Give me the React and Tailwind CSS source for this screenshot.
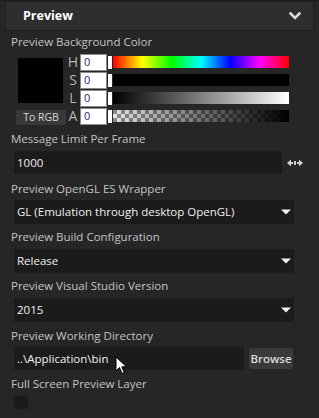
import React from "react";

const Label = ({ children, className = "" }) => (
  <div className={"pl-[11px] text-[11.5px] leading-[16px] text-[#c4c4c4] " + className}>{children}</div>
);

const DropTriangle = () => (
  <svg width="10" height="6" viewBox="0 0 10 6" className="shrink-0">
    <path d="M0 0.5 H10 L5 5.5 Z" fill="#f2f2f2" />
  </svg>
);

const Select = ({ value, className = "" }) => (
  <div className={"ml-[14px] w-[280px] h-[24px] bg-[#1b1b1b] flex items-center justify-between pl-[3px] pr-[3px] " + className}>
    <span className="text-[11.5px] text-[#f0f0f0]">{value}</span>
    <DropTriangle />
  </div>
);

const HslRow = ({ letter, bar }) => (
  <div className="flex items-center h-[18px]">
    <div className="w-[14px] text-center text-[14px] text-[#b4b4b4] leading-none">{letter}</div>
    <div className="w-[27px] h-[17px] bg-white border border-[#8a8a8a] flex items-center pl-[3px] text-[11px] text-[#1c2c6c]">0</div>
    <div className="w-[4px] h-[13px] bg-white ml-[1px]" />
    <div className="ml-px w-[176px] h-[12px] relative overflow-hidden">{bar}</div>
  </div>
);

export default function App() {
  return (
    <div
      className="w-[319px] h-[418px] bg-[#262626] overflow-hidden"
      style={{ fontFamily: '"Open Sans", "Noto Sans", sans-serif' }}
    >
      <div className="h-px bg-[#1c1c1c]" />
      <div className="mx-[5px] h-[30px] bg-[#2e2e2e] border border-[#1f1f1f] flex items-center justify-between pl-[17px] pr-[12px]">
        <span className="text-[12.5px] font-bold text-white">Preview</span>
        <svg width="12" height="8" viewBox="0 0 12 8">
          <path d="M1.5 1.5 L6 6 L10.5 1.5" stroke="#dcdcdc" strokeWidth="2.6" fill="none" strokeLinecap="square" />
        </svg>
      </div>

      <Label className="mt-[3px]">Preview Background Color</Label>

      <div className="flex mt-[3px] pl-[16px]">
        <div className="w-[50px] flex flex-col">
          <div className="ml-[2px] mt-[5px] w-[45px] h-[45px] bg-black" />
          <div className="mt-[7px] h-[15px] w-[50px] bg-[#393939] rounded-[2px] flex items-center justify-center text-[10.5px] text-[#d8d8d8]">
            To RGB
          </div>
        </div>
        <div className="flex flex-col">
          <HslRow
            letter="H"
            bar={<div className="w-full h-full bg-[linear-gradient(to_right,#ff0000,#ffff00,#00ff00,#00ffff,#0000ff,#ff00ff,#ff0000)]" />}
          />
          <HslRow letter="S" bar={<div className="w-full h-full bg-black" />} />
          <HslRow letter="L" bar={<div className="w-full h-full bg-[linear-gradient(to_right,#000000,#ffffff)]" />} />
          <HslRow
            letter="A"
            bar={
              <div className="w-full h-full bg-[repeating-conic-gradient(#ffffff_0_25%,#9a9a9a_0_50%)] bg-[length:8px_8px]">
                <div className="w-full h-full bg-[linear-gradient(to_right,rgba(0,0,0,0.1),#000000)]" />
              </div>
            }
          />
        </div>
      </div>

      <Label className="mt-[6px]">Message Limit Per Frame</Label>
      <div className="flex items-center mt-[4px]">
        <div className="ml-[14px] w-[268px] h-[23px] bg-[#1b1b1b] flex items-center pl-[3px] text-[11.5px] text-[#f0f0f0]">1000</div>
        <svg width="16" height="8" viewBox="0 0 16 8" className="ml-[5px]">
          <path d="M0 4 L4 0.5 V7.5 Z M16 4 L12 0.5 V7.5 Z" fill="#d0d0d0" />
          <rect x="3" y="3" width="3" height="2" fill="#d0d0d0" />
          <rect x="10" y="3" width="3" height="2" fill="#d0d0d0" />
          <rect x="7" y="2" width="2" height="4" fill="#d0d0d0" />
        </svg>
      </div>

      <Label className="mt-[7px]">Preview OpenGL ES Wrapper</Label>
      <Select className="mt-[3px]" value="GL (Emulation through desktop OpenGL)" />

      <Label className="mt-[5px]">Preview Build Configuration</Label>
      <Select className="mt-[4px]" value="Release" />

      <Label className="mt-[5px]">Preview Visual Studio Version</Label>
      <Select className="mt-[4px]" value="2015" />

      <Label className="mt-[6px]">Preview Working Directory</Label>
      <div className="flex items-center mt-[3px]">
        <div className="ml-[14px] w-[230px] h-[23px] bg-[#1b1b1b] flex items-center pl-[3px] text-[11.5px] text-[#f0f0f0] relative">
          ..\Application\bin
          <svg width="13" height="19" viewBox="0 0 13 19" className="absolute left-[101px] top-[9px]">
            <path d="M1 1 V15 L4.5 11.5 L7 17.5 L9.2 16.5 L6.8 10.8 H11.5 Z" fill="#ffffff" stroke="#000000" strokeWidth="1" strokeLinejoin="miter" />
          </svg>
        </div>
        <div className="ml-[5px] w-[44px] h-[21px] bg-[#3a3a3a] rounded-[2px] flex items-center justify-center text-[11.5px] font-semibold text-[#dcdcdc]">
          Browse
        </div>
      </div>

      <Label className="mt-[6px]">Full Screen Preview Layer</Label>
      <div className="ml-[14px] mt-[3px] w-[15px] h-[15px] bg-[#1b1b1b] border border-[#222]" />
    </div>
  );
}
